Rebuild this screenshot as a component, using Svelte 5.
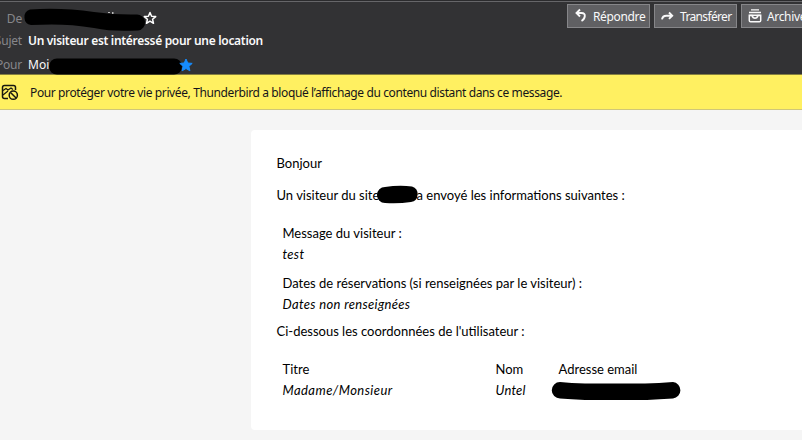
<script>
  const actions = [
    { id: 'reply', label: 'Répondre' },
    { id: 'forward', label: 'Transférer' },
    { id: 'archive', label: 'Archiver' },
  ];
</script>

{#snippet icon(id)}
  <svg class="icon" viewBox="0 0 16 16" width="16" height="16" fill="none" stroke="currentColor" stroke-width="1.900">
    {#if id === 'reply'}
      <path d="M7 1.500 3.500 5l3.500 3.500M4 5h4.500c2.600 0 3.500 1.200 3.300 3.200-.2 2.300-1.300 3.800-3.300 4.800" />
    {:else if id === 'forward'}
      <path d="M9 4.500 12.200 7.700 9 10.900M11.700 7.700H6.300C3.800 7.700 2.400 8.900 2 11.400" />
    {:else}
      <path d="M4 1.900h8M2 4.500h12" stroke-width="1.300" />
      <path d="M2.300 7.200h11.400v5.300q0 1.300-1.300 1.300H3.600q-1.300 0-1.300-1.300z" stroke-width="1.500" />
      <path d="M2.500 7.500H5q.8 2.700 3 2.700t3-2.700h2.500" stroke-width="1.500" />
    {/if}
  </svg>
{/snippet}

<main>
  <header>
    <div class="fields">
      <div class="field first">
        <span class="label">De</span>
        <svg class="redacted sender" width="124" height="24" viewBox="0 0 124 24">
          <path d="M86 4h2v1h-2zM90 4h1.500v2H90z" fill="#bbb" />
          <path d="M8 1.500C30 0 50 1 72 4q22 3 42 2.500a8 8 0 0 1 2 16C98 23 86 23 72 20 50 16 30 16 9 17A8 8 0 0 1 8 1.500z" />
        </svg>
        <svg class="star" width="14" height="14" viewBox="0 0 14 14">
          <path d="m7 1.500 1.600 3.700 4.100.400-3.100 2.700.9 4L7 10.200l-3.500 2.100.9-4L1.300 5.600l4.100-.4z" fill="none" stroke="#fff" stroke-width="1.500" stroke-linejoin="round" />
        </svg>
      </div>
      <div class="field">
        <span class="label">Sujet</span>
        <strong>Un visiteur est intéressé pour une location</strong>
      </div>
      <div class="field">
        <span class="label">Pour</span>
        <span class="me">Moi</span>
        <svg class="redacted recipient" width="134" height="17" viewBox="0 0 134 17">
          <path d="M9 .500h117a8 8 0 0 1 0 16H9A8 8 0 0 1 9 .500z" />
        </svg>
        <svg class="star known" width="14" height="14" viewBox="0 0 14 14">
          <path d="m7 1 1.800 4 4.400.400-3.300 2.900 1 4.500L7 10.500l-3.900 2.300 1-4.500L.8 5.400 5.200 5z" fill="#168cff" stroke="#168cff" stroke-linejoin="round" />
        </svg>
      </div>
    </div>
    <nav>
      {#each actions as action}
        <button class={action.id}>{@render icon(action.id)}<span>{action.label}</span></button>
      {/each}
    </nav>
  </header>

  <aside>
    <svg width="18" height="18" viewBox="0 0 18 18" fill="none" stroke="#17170f" stroke-width="1.500">
      <path d="M7 14.500H3.500q-2 0-2-2v-9q0-2 2-2h9q2 0 2 2V6" />
      <path d="M2 6.500 5 4.500l2 1.500 3-2 2 1.500M2 11l5-4" stroke-width="1.200" />
      <circle cx="12.300" cy="11.200" r="4.100" />
      <path d="m9.500 8.500 5.600 5.500" />
    </svg>
    <span>Pour protéger votre vie privée, Thunderbird a bloqué l’affichage du contenu distant dans ce message.</span>
  </aside>

  <article>
    <p class="hello">Bonjour</p>
    <p class="intro">
      <span class="site">Un visiteur du site</span>
      <svg class="hidden-site" width="44" height="20" viewBox="0 0 44 20">
        <path d="M9 2Q23 0 36 1.500a8 8 0 0 1-1 15.500Q22 19 9 18A8 8 0 0 1 9 2z" />
      </svg>
      <span class="sent">a envoyé les informations suivantes :</span>
    </p>
    <dl class="message">
      <dt>Message du visiteur :</dt>
      <dd>test</dd>
    </dl>
    <dl class="dates">
      <dt>Dates de réservations (si renseignées par le visiteur) :</dt>
      <dd>Dates non renseignées</dd>
    </dl>
    <p class="contact">Ci-dessous les coordonnées de l'utilisateur :</p>
    <div class="people">
      <dl><dt>Titre</dt><dd class="title">Madame/Monsieur</dd></dl>
      <dl><dt>Nom</dt><dd class="name">Untel</dd></dl>
      <dl>
        <dt>Adresse email</dt>
        <dd>
          <svg class="hidden-mail" width="132" height="20" viewBox="0 0 132 20">
            <path d="M9 1Q20 2 34 2.500H94Q108 2 122 1a8.300 8.300 0 0 1 0 16.500Q108 18 96 19H34Q20 18 9 17.500A8 8 0 0 1 9 1z" />
          </svg>
        </dd>
      </dl>
    </div>
  </article>
</main>

<style>
  :global(body) {
    overflow: hidden;
  }
  main {
    box-sizing: border-box;
    width: 802px;
    height: 440px;
    overflow: hidden;
    background: #f5f5f5;
    font: 12px/16px "Noto Sans", "Open Sans", sans-serif;
    color: #000;
  }
  svg {
    display: block;
    flex: none;
  }
  header {
    display: flex;
    box-sizing: border-box;
    height: 74px;
    background: linear-gradient(#2b2b2d 0 1px, #666669 1px 2px, #323234 2px);
    color: #f9f9fa;
  }
  .fields {
    flex: none;
    width: 567px;
    padding-top: 8px;
  }
  .field {
    display: flex;
    align-items: center;
    height: 24px;
  }
  .field.first {
    height: 21px;
  }
  .label {
    display: flex;
    flex: none;
    justify-content: flex-end;
    width: 22px;
    margin-right: 6px;
    color: #87878b;
    letter-spacing: -0.2px;
  }
  strong {
    font-size: 12px;
    font-weight: 600;
    letter-spacing: -0.31px;
    white-space: nowrap;
  }
  .me {
    width: 20px;
  }
  .sender {
    margin: 3px -5px 0 -6px;
  }
  .recipient {
    margin-top: 2px;
  }
  .star {
    margin: -1px 0 0 -3px;
  }
  .first .star {
    margin-left: 2px;
  }
  nav {
    display: flex;
    gap: 4px;
    padding-top: 4px;
  }
  button {
    display: flex;
    flex: none;
    align-items: center;
    box-sizing: border-box;
    width: 83px;
    height: 24px;
    padding: 2px 0 0 5px;
    border: 1px solid #868689;
    border-radius: 0;
    background: #606063;
    color: #f9f9fa;
    font: inherit;
    letter-spacing: -0.35px;
    white-space: nowrap;
  }
  button .icon {
    margin-top: -2px;
  }
  button span {
    margin-left: 4px;
  }
  .forward span {
    letter-spacing: -0.65px;
  }
  aside {
    display: flex;
    align-items: center;
    box-sizing: border-box;
    height: 36px;
    border-top: 1px solid #85803f;
    border-bottom: 1px solid #cfc678;
    background: #fff061;
    color: #15141a;
    white-space: nowrap;
  }
  aside svg {
    margin: 2px 11px 0 1px;
  }
  aside span {
    padding-top: 2px;
    letter-spacing: -0.385px;
  }
  article {
    box-sizing: border-box;
    width: 560px;
    height: 300px;
    margin: 20px 0 0 251px;
    padding: 23px 0 0 25.500px;
    border-radius: 4px;
    background: #fff;
    font: 13px/20px Lato, "Open Sans", sans-serif;
    white-space: nowrap;
  }
  p,
  dl,
  dd {
    margin: 0;
  }
  dt,
  dd {
    height: 21px;
    line-height: 21px;
  }
  dd {
    font-style: italic;
    letter-spacing: 0.34px;
  }
  .title {
    letter-spacing: 0.45px;
  }
  .name {
    letter-spacing: 0.2px;
  }
  .intro {
    display: flex;
    margin-top: 12px;
  }
  .site {
    width: 99px;
  }
  .hidden-site {
    margin-right: -3px;
  }
  .message {
    padding: 18px 0 0 6px;
  }
  .dates {
    padding: 8px 0 0 6px;
  }
  .contact {
    margin-top: 6px;
  }
  .people {
    display: grid;
    grid-template-columns: 213px 63px 140px;
    padding: 18px 0 0 6px;
  }
  .hidden-mail {
    margin: 1px 0 0 -8px;
  }
</style>
